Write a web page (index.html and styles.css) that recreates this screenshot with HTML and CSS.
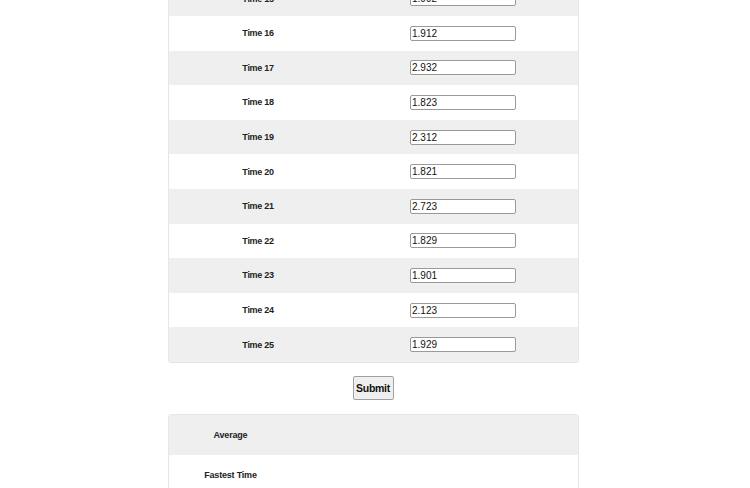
FILE: index.html
```html
<!DOCTYPE html>
<html>
<head>
<meta charset="utf-8">
<link rel="stylesheet" href="styles.css">
</head>
<body>
<form class="page">
  <div class="times">
    <div class="row gray"><span class="label">Time 15</span><span class="cell"><input class="field" value="1.992"></span></div>
    <div class="row"><span class="label">Time 16</span><span class="cell"><input class="field" value="1.912"></span></div>
    <div class="row gray"><span class="label">Time 17</span><span class="cell"><input class="field" value="2.932"></span></div>
    <div class="row"><span class="label">Time 18</span><span class="cell"><input class="field" value="1.823"></span></div>
    <div class="row gray"><span class="label">Time 19</span><span class="cell"><input class="field" value="2.312"></span></div>
    <div class="row"><span class="label">Time 20</span><span class="cell"><input class="field" value="1.821"></span></div>
    <div class="row gray"><span class="label">Time 21</span><span class="cell"><input class="field" value="2.723"></span></div>
    <div class="row"><span class="label">Time 22</span><span class="cell"><input class="field" value="1.829"></span></div>
    <div class="row gray"><span class="label">Time 23</span><span class="cell"><input class="field" value="1.901"></span></div>
    <div class="row"><span class="label">Time 24</span><span class="cell"><input class="field" value="2.123"></span></div>
    <div class="row gray"><span class="label">Time 25</span><span class="cell"><input class="field" value="1.929"></span></div>
  </div>
  <div class="actions"><button type="button" class="submit">Submit</button></div>
  <div class="results">
    <div class="rrow gray"><span class="rlabel">Average</span><span></span></div>
    <div class="rrow"><span class="rlabel">Fastest Time</span><span></span></div>
  </div>
</form>
</body>
</html>
```
FILE: styles.css
```css
html, body {
  margin: 0;
  padding: 0;
  background: #fff;
}
body {
  font-family: "Liberation Sans", Arial, sans-serif;
  color: #1a1a1a;
  overflow: hidden;
}
.page {
  width: 411px;
  margin: -18.6px auto 0;
  padding-right: 3px;
}
.times {
  border: 1px solid #e6e6e6;
  border-top: none;
  border-radius: 0 0 3px 3px;
  overflow: hidden;
}
.row {
  display: grid;
  grid-template-columns: 178px 1fr;
  height: 34.6px;
  align-items: center;
  background: #fff;
}
.row.gray, .rrow.gray {
  background: #efefef;
}
.label {
  text-align: center;
  font-size: 9px;
  font-weight: bold;
  letter-spacing: -0.3px;
  color: #222;
}
.cell {
  padding-left: 63px;
  display: flex;
}
.field {
  box-sizing: border-box;
  width: 106px;
  height: 15px;
  margin: 0;
  padding: 0 2px 0 1px;
  border: 1px solid #9a9a9a;
  border-radius: 2px;
  background: #fff;
  font-family: "Liberation Sans", Arial, sans-serif;
  font-size: 10px;
  color: #111;
  outline: none;
}
.actions {
  display: flex;
  justify-content: center;
  padding: 13px 0 14px;
}
.submit {
  box-sizing: border-box;
  width: 41px;
  height: 24px;
  margin: 0 0 0 -1px;
  padding: 0;
  border: 1px solid #a0a0a0;
  border-radius: 2px;
  background: #efefef;
  font-family: "Liberation Sans", Arial, sans-serif;
  font-size: 10.5px;
  font-weight: bold;
  color: #111;
  letter-spacing: -0.3px;
}
.results {
  border: 1px solid #e6e6e6;
  border-radius: 3px 3px 0 0;
  overflow: hidden;
}
.rrow {
  display: grid;
  grid-template-columns: 123px 1fr;
  height: 40px;
  align-items: center;
  background: #fff;
}
.rlabel {
  text-align: center;
  font-size: 9px;
  font-weight: bold;
  letter-spacing: -0.2px;
  color: #222;
}
```
